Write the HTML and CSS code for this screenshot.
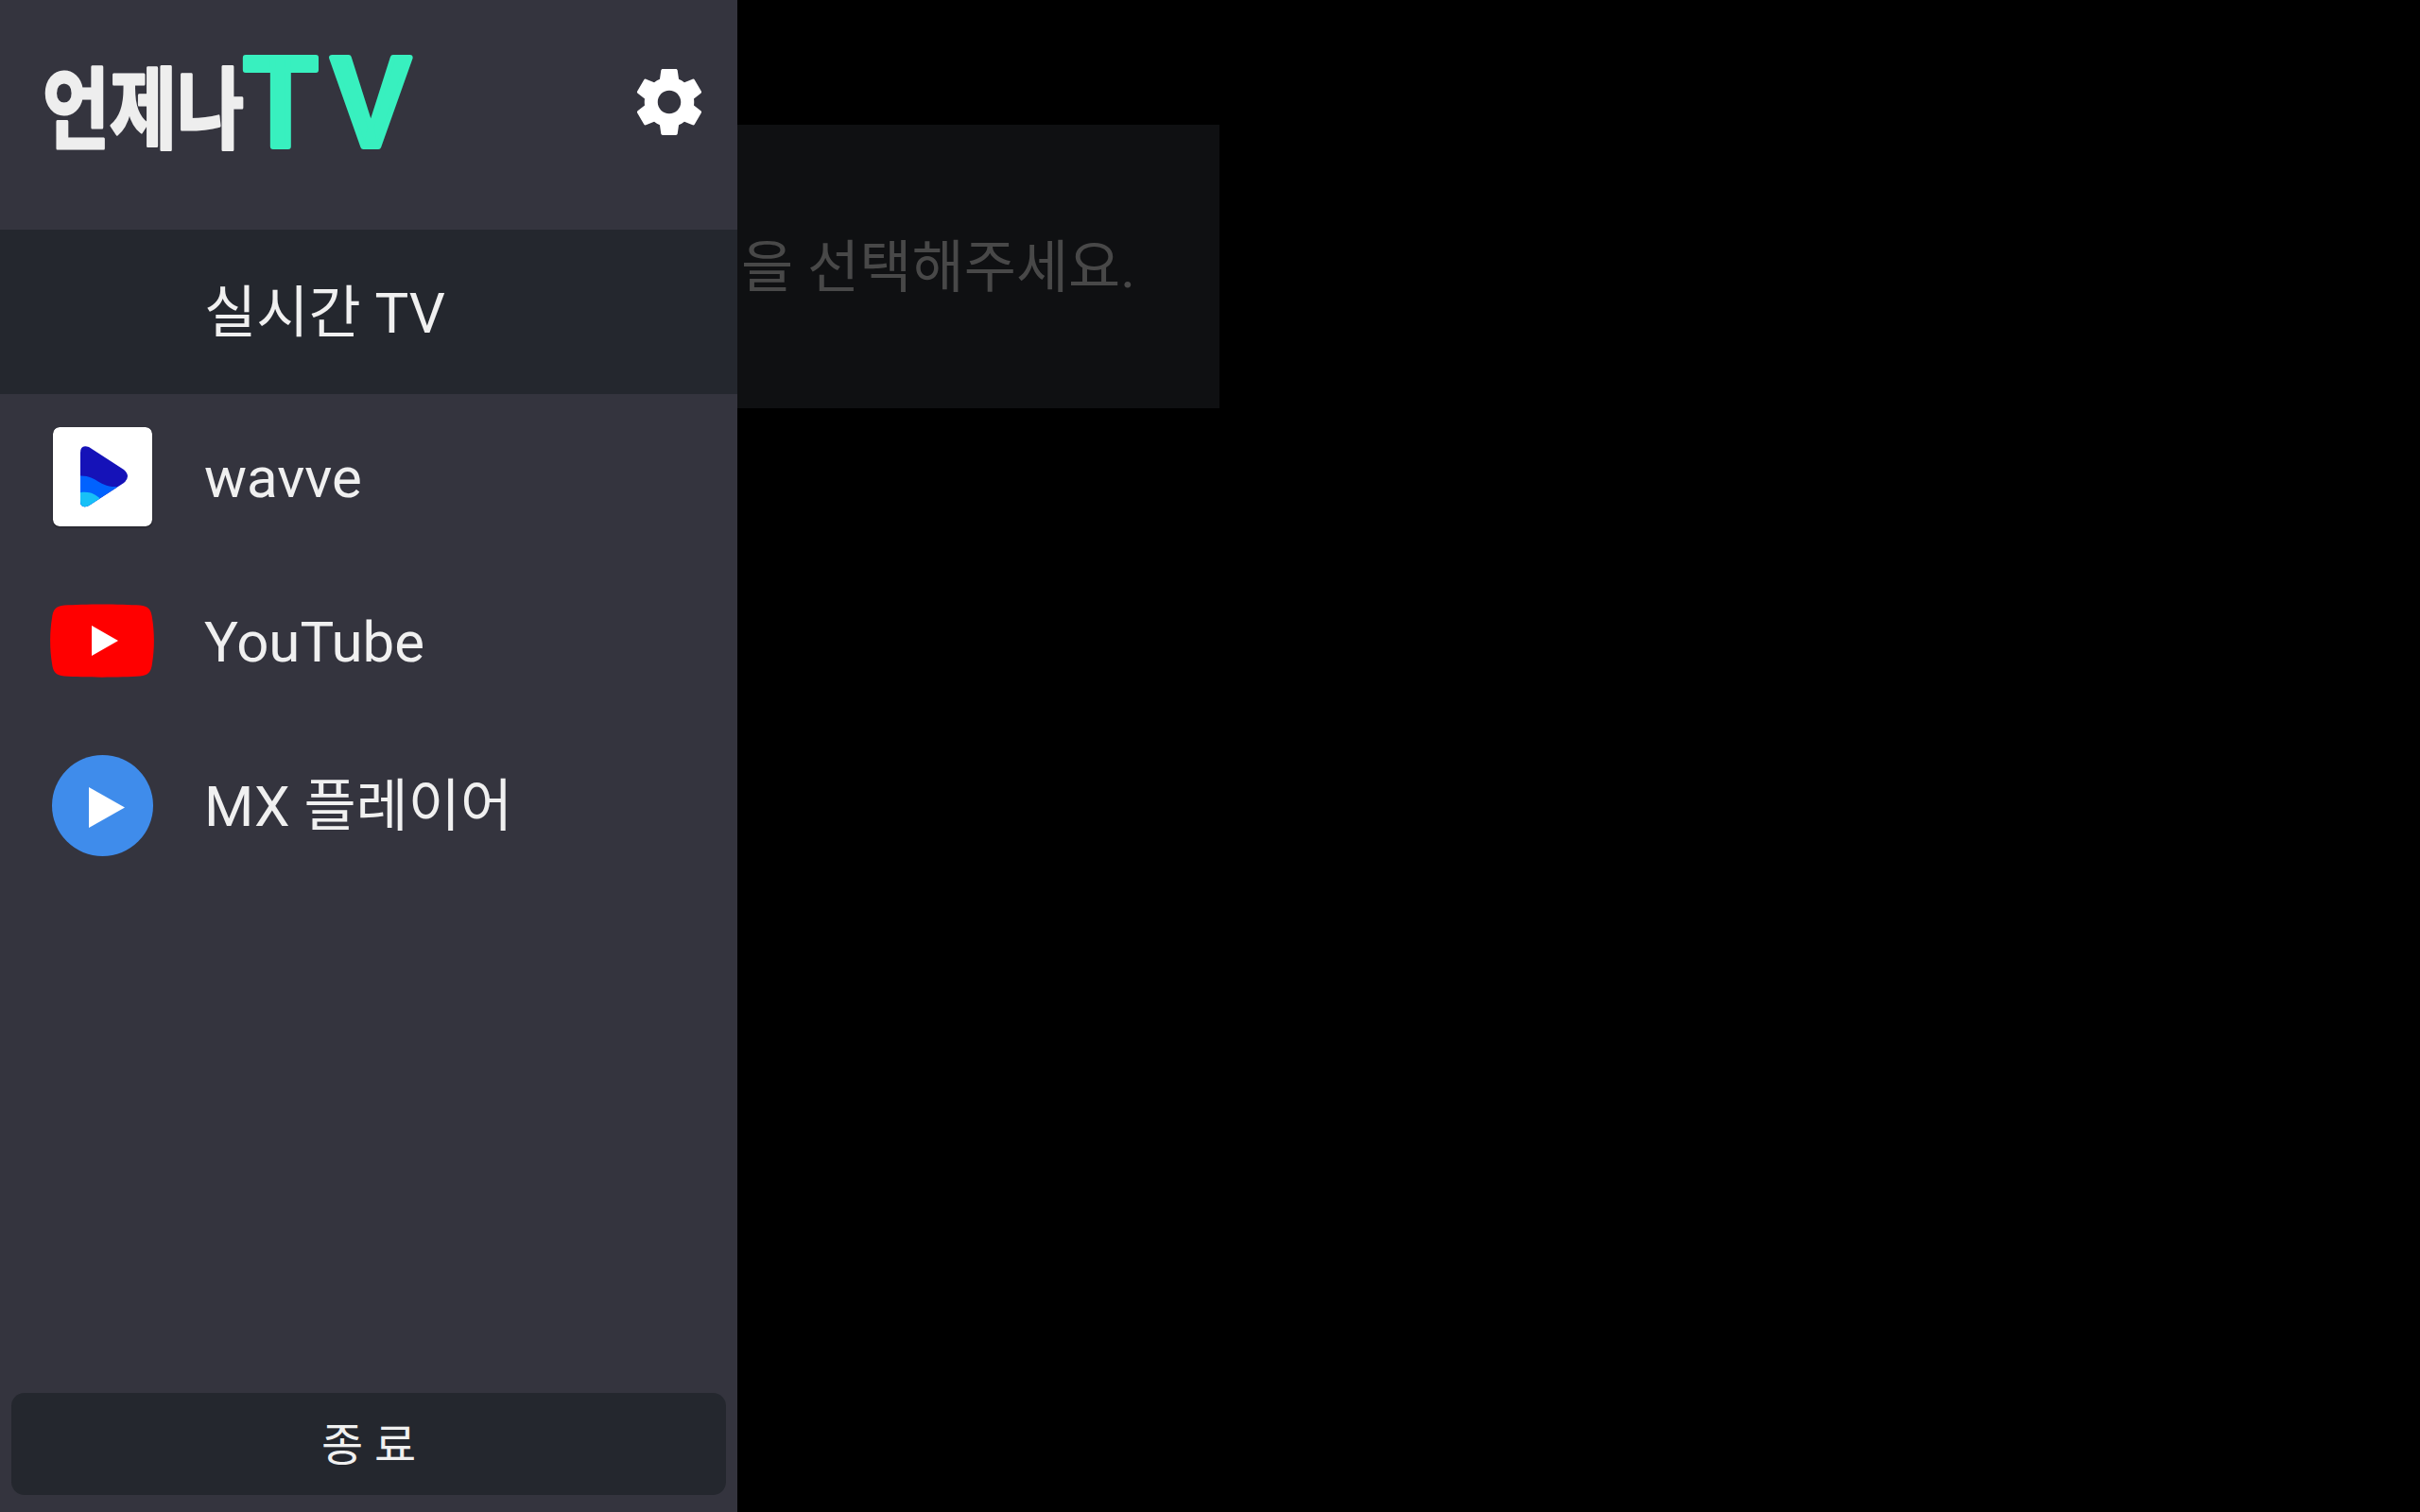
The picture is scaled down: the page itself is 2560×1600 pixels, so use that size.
FILE: index.html
```html
<!DOCTYPE html>
<html lang="ko">
<head>
    <meta charset="UTF-8">
    <meta name="viewport" content="width=device-width, initial-scale=1.0">
    <title>언제나 TV</title>
    <link rel="stylesheet" href="styles.css">
</head>
<body>
    <div class="app">
        <aside class="drawer">
            <header class="drawer-head">
                <svg class="logo" width="410" height="150" viewBox="0 0 410 150">
                    <text class="logo-ko" x="3" y="120" textLength="213" lengthAdjust="spacingAndGlyphs">언제나</text>
                    <text class="logo-tv" x="215 308" y="125">TV</text>
                </svg>
                <svg class="gear" width="84" height="84" viewBox="0 0 24 24">
                    <path d="M19.43 12.98c.04-.32.07-.64.07-.98s-.03-.66-.07-.98l2.11-1.65c.19-.15.24-.42.12-.64l-2-3.46c-.12-.22-.39-.3-.61-.22l-2.49 1c-.52-.4-1.08-.73-1.69-.98l-.38-2.65C14.46 2.18 14.25 2 14 2h-4c-.25 0-.46.18-.49.42l-.38 2.65c-.61.25-1.17.59-1.69.98l-2.49-1c-.23-.09-.49 0-.61.22l-2 3.46c-.13.22-.07.49.12.64l2.11 1.65c-.04.32-.07.65-.07.98s.03.66.07.98l-2.11 1.65c-.19.15-.24.42-.12.64l2 3.46c.12.22.39.3.61.22l2.49-1c.52.4 1.08.73 1.69.98l.38 2.65c.03.24.24.42.49.42h4c.25 0 .46-.18.49-.42l.38-2.65c.61-.25 1.17-.59 1.69-.98l2.49 1c.23.09.49 0 .61-.22l2-3.46c.12-.22.07-.49-.12-.64l-2.11-1.65zM12 15.5c-1.93 0-3.5-1.57-3.5-3.5s1.57-3.5 3.5-3.5 3.5 1.57 3.5 3.5-1.57 3.5-3.5 3.5z"/>
                </svg>
            </header>

            <nav class="menu">
                <div class="menu-item active">
                    <span class="menu-icon"></span>
                    <span class="menu-label">실시간 TV</span>
                </div>
                <div class="menu-item">
                    <span class="menu-icon">
                        <svg class="wavve" width="105" height="105" viewBox="0 0 105 105">
                            <defs>
                                <clipPath id="wavveClip">
                                    <path d="M29 27Q29 18 38 21L75 45Q83 52 75 59L38 83Q29 87 29 78Z"/>
                                </clipPath>
                            </defs>
                            <rect width="105" height="105" rx="7" fill="#fff"/>
                            <g clip-path="url(#wavveClip)">
                                <rect x="25" y="15" width="60" height="75" fill="#1512b8"/>
                                <path d="M25 52C45 49 48 64 68 63L60 90H25Z" fill="#0062ff"/>
                                <path d="M25 70C37 67 44 70 50 76L30 90H25Z" fill="#17c0f7"/>
                            </g>
                        </svg>
                    </span>
                    <span class="menu-label">wavve</span>
                </div>
                <div class="menu-item">
                    <span class="menu-icon">
                        <svg width="110" height="78" viewBox="0 0 110 78">
                            <path d="M15 1.500C35 0 75 0 95 1.500C104 2.500 107 6 108 15C110.500 30 110.500 48 108 63C107 72 104 75.500 95 76.500C75 78 35 78 15 76.500C6 75.500 3 72 2 63C-.5 48 -.5 30 2 15C3 6 6 2.500 15 1.500Z" fill="#ff0000"/>
                            <path d="M44 23L72 39L44 55Z" fill="#fff"/>
                        </svg>
                    </span>
                    <span class="menu-label">YouTube</span>
                </div>
                <div class="menu-item">
                    <span class="menu-icon">
                        <svg width="107" height="107" viewBox="0 0 107 107">
                            <circle cx="53.500" cy="53.500" r="53.500" fill="#3f8ceb"/>
                            <path d="M39 34L77 55.500L39 77Z" fill="#fff"/>
                        </svg>
                    </span>
                    <span class="menu-label">MX 플레이어</span>
                </div>
            </nav>

            <div class="drawer-foot">
                <button class="exit-btn">종 료</button>
            </div>
        </aside>

        <main class="content">
            <div class="notice">을 선택해주세요.</div>
        </main>
    </div>
</body>
</html>
```

FILE: styles.css
```css
* {
    box-sizing: border-box;
}

html, body {
    margin: 0;
    height: 100%;
    background-color: #000;
}

body {
    font-family: Roboto, "Noto Sans CJK KR", sans-serif;
    overflow: hidden;
}

.app {
    display: flex;
    height: 1600px;
}

.drawer {
    width: 780px;
    height: 100%;
    display: flex;
    flex-direction: column;
    background-color: #34343e;
    color: #f0f0f0;
}

.drawer-head {
    height: 243px;
    padding: 30px 30px 0 42px;
    display: flex;
    justify-content: space-between;
    align-items: flex-start;
}

.logo {
    overflow: visible;
}

.logo-ko {
    font-family: "Noto Sans CJK KR", sans-serif;
    font-size: 94px;
    font-weight: 700;
    fill: #eeeeee;
    stroke: #eeeeee;
    stroke-width: 3px;
    stroke-linejoin: round;
}

.logo-tv {
    font-family: Roboto, sans-serif;
    font-size: 131px;
    font-weight: 500;
    fill: #38f0bf;
    stroke: #38f0bf;
    stroke-width: 6px;
    stroke-linejoin: round;
}

.gear {
    margin-top: 36px;
    fill: #fff;
}

.menu {
    flex: 1;
}

.menu-item {
    height: 174px;
    padding-left: 53px;
    display: flex;
    align-items: center;
    gap: 53px;
}

.menu-item.active {
    background-color: #24272e;
}

.menu-icon {
    width: 110px;
    height: 110px;
    display: flex;
    align-items: center;
    justify-content: center;
}

.wavve {
    border-radius: 7px;
    box-shadow: 0 1px 2px rgba(0, 0, 0, 0.4);
}

.menu-label {
    padding-top: 4px;
    font-size: 60px;
    line-height: 70px;
}

.drawer-foot {
    padding: 0 12px 18px;
}

.exit-btn {
    width: 100%;
    height: 108px;
    padding-top: 4px;
    border: none;
    border-radius: 14px;
    background-color: #24272e;
    color: #f0f0f0;
    font-family: inherit;
    font-size: 48px;
    line-height: 56px;
}

.content {
    flex: 1;
    padding-top: 132px;
}

.notice {
    width: 510px;
    height: 300px;
    padding-left: 4px;
    padding-top: 4px;
    display: flex;
    align-items: center;
    background-color: #0f1012;
    color: #484848;
    font-size: 60px;
    line-height: 70px;
}
```
